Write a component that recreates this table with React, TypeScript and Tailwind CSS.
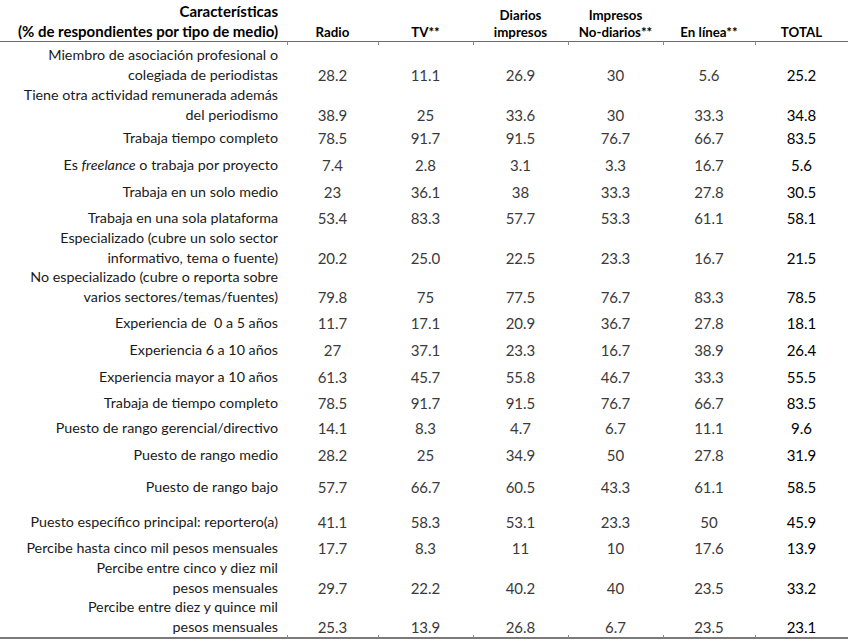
import React from "react";

type Row = { label: React.ReactNode[]; values: string[]; h: string };

const rows: Row[] = [
  { label: ["Miembro de asociación profesional o", "colegiada de periodistas"], values: ["28.2", "11.1", "26.9", "30", "5.6", "25.2"], h: "h-[40px]" },
  { label: ["Tiene otra actividad remunerada además", "del periodismo"], values: ["38.9", "25", "33.6", "30", "33.3", "34.8"], h: "h-[37px]" },
  { label: ["Trabaja tiempo completo"], values: ["78.5", "91.7", "91.5", "76.7", "66.7", "83.5"], h: "h-[26px]" },
  {
    label: [
      <>
        Es <i>freelance</i> o trabaja por proyecto
      </>,
    ],
    values: ["7.4", "2.8", "3.1", "3.3", "16.7", "5.6"],
    h: "h-[27px]",
  },
  { label: ["Trabaja en un solo medio"], values: ["23", "36.1", "38", "33.3", "27.8", "30.5"], h: "h-[27px]" },
  { label: ["Trabaja en una sola plataforma"], values: ["53.4", "83.3", "57.7", "53.3", "61.1", "58.1"], h: "h-[26px]" },
  { label: ["Especializado (cubre un solo sector", "informativo, tema o fuente)"], values: ["20.2", "25.0", "22.5", "23.3", "16.7", "21.5"], h: "h-[39px]" },
  { label: ["No especializado (cubre o reporta sobre", "varios sectores/temas/fuentes)"], values: ["79.8", "75", "77.5", "76.7", "83.3", "78.5"], h: "h-[39px]" },
  { label: ["Experiencia de \u00a00 a 5 años"], values: ["11.7", "17.1", "20.9", "36.7", "27.8", "18.1"], h: "h-[27px]" },
  { label: ["Experiencia 6 a 10 años"], values: ["27", "37.1", "23.3", "16.7", "38.9", "26.4"], h: "h-[27px]" },
  { label: ["Experiencia mayor a 10 años"], values: ["61.3", "45.7", "55.8", "46.7", "33.3", "55.5"], h: "h-[27px]" },
  { label: ["Trabaja de tiempo completo"], values: ["78.5", "91.7", "91.5", "76.7", "66.7", "83.5"], h: "h-[26px]" },
  { label: ["Puesto de rango gerencial/directivo"], values: ["14.1", "8.3", "4.7", "6.7", "11.1", "9.6"], h: "h-[25px]" },
  { label: ["Puesto de rango medio"], values: ["28.2", "25", "34.9", "50", "27.8", "31.9"], h: "h-[27px]" },
  { label: ["Puesto de rango bajo"], values: ["57.7", "66.7", "60.5", "43.3", "61.1", "58.5"], h: "h-[32px]" },
  { label: ["Puesto específico principal: reportero(a)"], values: ["41.1", "58.3", "53.1", "23.3", "50", "45.9"], h: "h-[35px]" },
  { label: ["Percibe hasta cinco mil pesos mensuales"], values: ["17.7", "8.3", "11", "10", "17.6", "13.9"], h: "h-[26px]" },
  { label: ["Percibe entre cinco y diez mil", "pesos mensuales"], values: ["29.7", "22.2", "40.2", "40", "23.5", "33.2"], h: "h-[39px]" },
  { label: ["Percibe entre diez y quince mil", "pesos mensuales"], values: ["25.3", "13.9", "26.8", "6.7", "23.5", "23.1"], h: "h-[38px]" },
];

const headers: string[][] = [
  ["Radio"],
  ["TV**"],
  ["Diarios", "impresos"],
  ["Impresos", "No-diarios**"],
  ["En línea**"],
  ["TOTAL"],
];

const cols = "grid grid-cols-[287px_91px_95px_95px_95px_92px_93px]";

function Rule({ bottom }: { bottom?: boolean }) {
  return (
    <div className={`${cols} h-[4px]`}>
      {Array.from({ length: 7 }).map((_, i) => (
        <div
          key={i}
          className={
            (bottom ? "border-b-2 border-[#7a7a7a]" : "border-t border-[#6b6b6b]") +
            (i > 0 ? " border-l border-l-[#8a8a8a]" : "")
          }
        />
      ))}
    </div>
  );
}

export default function App() {
  return (
    <div className="h-[642px] w-[850px] bg-white font-[Lato,sans-serif] text-[15px] text-[#1a1a1a]">
      <div className={`${cols} h-[41px] items-end`}>
        <div className="pr-[9px] text-right font-bold leading-[20px] text-black">
          <div>Características</div>
          <div>(% de respondientes por tipo de medio)</div>
        </div>
        {headers.map((h) => (
          <div key={h.join()} className="text-center text-[13.3px] font-bold leading-[17px] text-black">
            {h.map((line) => (
              <div key={line}>{line}</div>
            ))}
          </div>
        ))}
      </div>
      <Rule />
      {rows.map((r, idx) => (
        <div key={idx} className={`${cols} ${r.h} items-end leading-[20px]`}>
          <div className="pr-[9px] text-right text-[14.3px]">
            {r.label.map((l, i) => (
              <div key={i} className="whitespace-nowrap">
                {l}
              </div>
            ))}
          </div>
          {r.values.map((v, i) => (
            <div key={i} className={i === 5 ? "text-center text-black" : "text-center text-[#3a3a3a]"}>
              {v}
            </div>
          ))}
        </div>
      ))}
      <Rule bottom />
    </div>
  );
}
